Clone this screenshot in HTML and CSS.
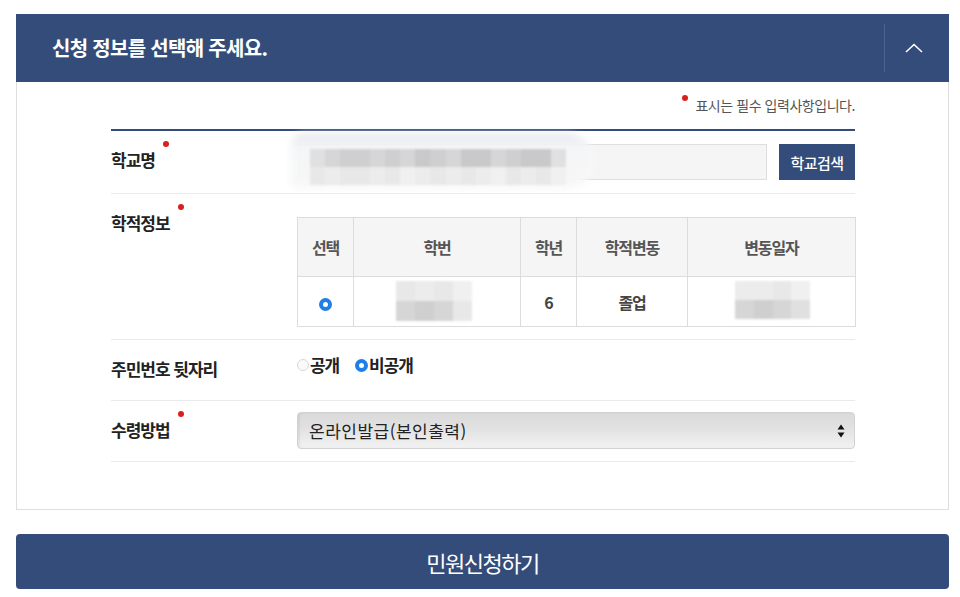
FILE: index.html
```html
<!DOCTYPE html>
<html lang="ko">
<head>
<meta charset="utf-8">
<title>신청 정보</title>
<link rel="stylesheet" href="styles.css">
</head>
<body>
<div class="page">
  <section class="panel">
    <header class="panel-head">
      <h2 class="panel-title">신청 정보를 선택해 주세요.</h2>
      <button class="toggle" type="button" aria-label="접기">
        <svg width="18" height="10" viewBox="0 0 18 10"><path d="M1 9 L9 1.5 L17 9" fill="none" stroke="#fff" stroke-width="1.6"/></svg>
      </button>
    </header>
    <div class="panel-body">
      <p class="note"><span class="note-dot"></span>표시는 필수 입력사항입니다.</p>
      <div class="form">
        <div class="row row-school">
          <div class="label"><span class="req">학교명</span></div>
          <div class="field field-school">
            <div class="input-wrap">
              <div class="fake-input"></div>
              <div class="blob blob-school"></div>
              <div class="mosaic mosaic-school">
                <i class="c3"></i><i class="c2"></i><i class="c1"></i><i class="c1"></i><i class="c2"></i><i class="c1"></i><i class="c2"></i><i class="c0"></i><i class="c1"></i><i class="c2"></i><i class="c0"></i><i class="c0"></i><i class="c2"></i><i class="c1"></i><i class="c0"></i><i class="c0"></i><i class="c3"></i>
                <i class="c4"></i><i class="c5"></i><i class="c4"></i><i class="c4"></i><i class="c5"></i><i class="c4"></i><i class="c6"></i><i class="c5"></i><i class="c4"></i><i class="c5"></i><i class="c4"></i><i class="c5"></i><i class="c6"></i><i class="c4"></i><i class="c5"></i><i class="c4"></i><i class="c6"></i>
              </div>
            </div>
            <button class="btn-search" type="button">학교검색</button>
          </div>
        </div>
        <div class="row row-record">
          <div class="label"><span class="req">학적정보</span></div>
          <div class="field field-record">
            <table class="record">
              <thead>
                <tr><th class="col-sel">선택</th><th class="col-num">학번</th><th class="col-grade">학년</th><th class="col-change">학적변동</th><th class="col-date">변동일자</th></tr>
              </thead>
              <tbody>
                <tr>
                  <td><span class="radio on"></span></td>
                  <td><div class="cell-blur"><div class="mosaic mosaic-num"><i class="c4"></i><i class="c5"></i><i class="c4"></i><i class="c6"></i><i class="c2"></i><i class="c1"></i><i class="c2"></i><i class="c4"></i></div></div></td>
                  <td class="val">6</td>
                  <td class="val">졸업</td>
                  <td><div class="cell-blur"><div class="mosaic mosaic-date"><i class="c5"></i><i class="c5"></i><i class="c4"></i><i class="c6"></i><i class="c2"></i><i class="c1"></i><i class="c2"></i><i class="c3"></i></div></div></td>
                </tr>
              </tbody>
            </table>
          </div>
        </div>
        <div class="row row-id">
          <div class="label"><span>주민번호 뒷자리</span></div>
          <div class="field field-id">
            <label class="opt"><span class="radio off"></span>공개</label>
            <label class="opt"><span class="radio on"></span>비공개</label>
          </div>
        </div>
        <div class="row row-method">
          <div class="label"><span class="req">수령방법</span></div>
          <div class="field field-method">
            <div class="select">
              <span class="select-text">온라인발급(본인출력)</span>
              <svg class="select-arrow" width="8" height="14" viewBox="0 0 8 14"><path d="M4 0.5 L7.5 5.5 L0.5 5.5 Z M4 13.5 L7.5 8.5 L0.5 8.5 Z" fill="#111"/></svg>
            </div>
          </div>
        </div>
      </div>
    </div>
  </section>
  <button class="submit" type="button">민원신청하기</button>
</div>
</body>
</html>
```

FILE: styles.css
```css
* { box-sizing: border-box; }
html, body { margin: 0; padding: 0; background: #fff; }
body {
  font-family: "Noto Sans CJK KR", "Noto Sans", sans-serif;
  color: #222;
}
.page {
  width: 960px;
  padding: 14px 11px 0 16px;
}
.panel { width: 933px; }
.panel-head {
  height: 68px;
  background: #344c7a;
  display: flex;
  align-items: center;
  justify-content: space-between;
  padding-left: 36px;
}
.panel-title {
  margin: 0;
  color: #fff;
  font-size: 20px;
  font-weight: 700;
  letter-spacing: -0.7px;
  line-height: 24px;
}
.toggle {
  width: 65px;
  height: 48px;
  border: 0;
  border-left: 1px solid rgba(255,255,255,0.13);
  background: transparent;
  padding: 0 6px 0 0;
  display: flex;
  align-items: center;
  justify-content: center;
}
.toggle svg { display: block; margin-top: -1px; }
.panel-body {
  border: 1px solid #dedede;
  border-top: 0;
  padding: 11px 93px 47px 94px;
}
.note {
  margin: 0 0 12px;
  height: 24px;
  line-height: 24px;
  text-align: right;
  font-size: 14px;
  color: #555;
  letter-spacing: -0.45px;
  display: flex;
  justify-content: flex-end;
  align-items: flex-start;
}
.note-dot {
  width: 6px;
  height: 6px;
  border-radius: 50%;
  background: #d9201f;
  margin: 2px 7px 0 0;
}
.form { border-top: 2px solid #344c7a; }
.row {
  display: flex;
  border-bottom: 1px solid #ebebeb;
}
.row-school { height: 63px; }
.row-record { height: 146px; }
.row-id { height: 61px; }
.row-method { height: 61px; }
.label {
  width: 186px;
  flex: none;
  padding-top: 18px;
  font-size: 17px;
  line-height: 22px;
  font-weight: 700;
  letter-spacing: -1px;
  color: #222;
}
.req { position: relative; }
.req::after {
  content: "";
  position: absolute;
  left: calc(100% + 8px);
  top: -6px;
  width: 6px;
  height: 6px;
  border-radius: 50%;
  background: #d9201f;
}
.field { flex: 1; }
.field-school {
  display: flex;
  gap: 12px;
  padding-top: 13px;
  padding-left: 1px;
}
.input-wrap {
  position: relative;
  flex: 1;
  height: 36px;
}
.fake-input {
  height: 36px;
  background: #f5f5f5;
  border: 1px solid #dedede;
}
.blob {
  position: absolute;
  background: #fff;
  border-radius: 20px 40px 40px 10px;
  filter: blur(3px);
}
.blob-school {
  left: -8px;
  top: -11px;
  width: 305px;
  height: 56px;
  background: linear-gradient(180deg, #e6e9ee 0%, #f6f7f9 30%, #f8f8f8 100%);
  opacity: 0.95;
}
.mosaic {
  position: absolute;
  display: grid;
  filter: blur(1px);
}
.mosaic i { display: block; }
.mosaic-school {
  left: 12px;
  top: 5px;
  width: 256px;
  height: 36px;
  grid-template-columns: repeat(17, 1fr);
  grid-template-rows: 1fr 1fr;
}
.c0 { background: #c9c9c9; }
.c1 { background: #cfcfcf; }
.c2 { background: #d6d6d6; }
.c3 { background: #e0e0e0; }
.c4 { background: #e8e8e8; }
.c5 { background: #ececec; }
.c6 { background: #f0f0f0; }
.btn-search {
  width: 76px;
  height: 36px;
  border: 0;
  background: #344c7a;
  color: #fff;
  font-family: inherit;
  font-size: 15px;
  letter-spacing: -0.6px;
  font-weight: 500;
  padding: 0;
}
.field-record { padding-top: 23px; }
.record {
  width: 558px;
  border-collapse: collapse;
  table-layout: fixed;
  border: 1px solid #dcdcdc;
}
.record th, .record td {
  border: 1px solid #dcdcdc;
  text-align: center;
  padding: 0;
}
.record th {
  height: 59px;
  background: #f5f5f5;
  font-size: 16px;
  font-weight: 700;
  color: #555;
  letter-spacing: -1.1px;
}
.record td {
  height: 50px;
  font-size: 16px;
  font-weight: 700;
  color: #444;
  letter-spacing: -1.1px;
}
.col-sel { width: 56px; }
.col-num { width: 167px; }
.col-grade { width: 56px; }
.col-change { width: 111px; }
.col-date { width: 168px; }
.cell-blur {
  position: relative;
  height: 48px;
}
.mosaic-num {
  left: 42px;
  top: 3px;
  width: 76px;
  height: 40px;
  grid-template-columns: repeat(4, 1fr);
  grid-template-rows: 1fr 1fr;
}
.mosaic-date {
  left: 47px;
  top: 3px;
  width: 75px;
  height: 38px;
  grid-template-columns: repeat(4, 1fr);
  grid-template-rows: 1fr 1fr;
}
.radio {
  display: inline-block;
  width: 13px;
  height: 13px;
  border-radius: 50%;
  vertical-align: middle;
}
.radio.on {
  border: 4px solid #1f7fe6;
  background: #fff;
}
.radio.off {
  width: 12px;
  height: 12px;
  border: 1px solid #d8d8d8;
  background: #fafafa;
}
.field-id {
  display: flex;
  align-items: center;
  gap: 16px;
  padding-top: 15px;
  height: 20px;
  box-sizing: content-box;
}
.opt {
  display: flex;
  align-items: center;
  gap: 1px;
  font-size: 17px;
  font-weight: 700;
  letter-spacing: -1.1px;
  line-height: 20px;
  color: #222;
}
.field-method { padding-top: 11px; }
.select {
  height: 37px;
  width: 558px;
  border: 1px solid #d2d2d2;
  border-radius: 4px;
  background: linear-gradient(180deg, #dadada 0%, #e2e2e2 45%, #f2f2f2 100%);
  box-shadow: inset 2px 0 2px rgba(0,0,0,0.06);
  display: flex;
  align-items: center;
  justify-content: space-between;
  padding: 0 9px 0 11px;
}
.select-text {
  font-size: 17px;
  letter-spacing: 0.5px;
  color: #222;
}
.select-arrow { display: block; }
.submit {
  display: block;
  width: 933px;
  height: 55px;
  margin-top: 24px;
  border: 0;
  border-radius: 4px;
  background: #344c7a;
  color: #fff;
  font-family: inherit;
  font-size: 22px;
  letter-spacing: -1.5px;
  font-weight: 400;
  padding: 0;
}
```
